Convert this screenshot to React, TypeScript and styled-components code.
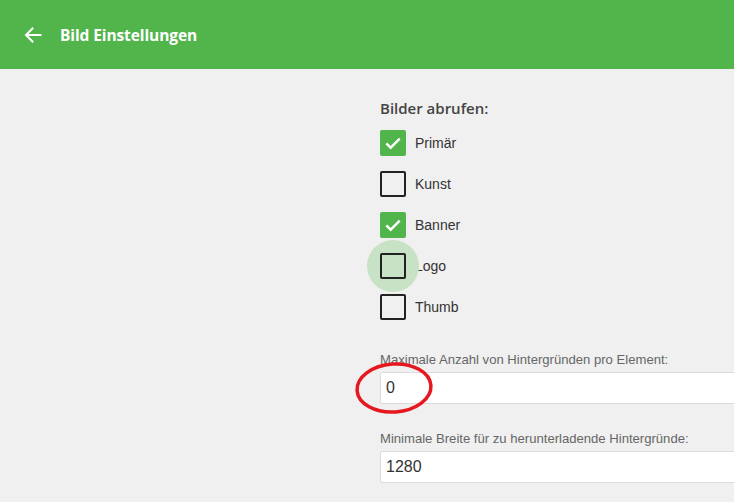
import styled, { createGlobalStyle } from 'styled-components';

const GlobalStyle = createGlobalStyle`
  html, body {
    margin: 0;
    padding: 0;
    overflow: hidden;
    background: #f0f0f0;
  }
  * {
    box-sizing: border-box;
  }
`;

const options = [
  { name: 'Primär', checked: true },
  { name: 'Kunst', checked: false },
  { name: 'Banner', checked: true },
  { name: 'Logo', checked: false, focused: true },
  { name: 'Thumb', checked: false },
];

const App = () => {
  return (
    <Page>
      <GlobalStyle />
      <Header>
        <BackButton aria-label="Zurück">
          <svg width="18" height="18" viewBox="0 0 18 18" fill="none">
            <path
              d="M16.5 9H2.5M8.5 2.5L2 9l6.5 6.5"
              stroke="#fff"
              strokeWidth="2"
              strokeLinecap="square"
            />
          </svg>
        </BackButton>
        <Title>Bild Einstellungen</Title>
      </Header>
      <Main>
        <Form>
          <SectionTitle>Bilder abrufen:</SectionTitle>
          <CheckList>
            {options.map(option => (
              <CheckRow key={option.name}>
                <BoxWrap>
                  {option.focused ? <Ripple /> : null}
                  <Box $checked={option.checked}>
                    {option.checked ? (
                      <svg width="18" height="18" viewBox="0 0 18 18" fill="none">
                        <path
                          d="M2.3 9.3l4.4 4.4L15.7 4.6"
                          stroke="#fff"
                          strokeWidth="2.4"
                        />
                      </svg>
                    ) : null}
                  </Box>
                </BoxWrap>
                <CheckLabel>{option.name}</CheckLabel>
              </CheckRow>
            ))}
          </CheckList>
          <Field>
            <FieldLabel>Maximale Anzahl von Hintergründen pro Element:</FieldLabel>
            <InputWrap>
              <TextInput defaultValue="0" />
              <Marker width="82" height="56" viewBox="0 0 82 56">
                <ellipse
                  cx="41"
                  cy="28"
                  rx="37"
                  ry="24"
                  transform="rotate(-4 41 28)"
                  fill="none"
                  stroke="#e5171f"
                  strokeWidth="3.5"
                />
              </Marker>
            </InputWrap>
          </Field>
          <Field>
            <FieldLabel>Minimale Breite für zu herunterladende Hintergründe:</FieldLabel>
            <InputWrap>
              <TextInput defaultValue="1280" />
            </InputWrap>
          </Field>
        </Form>
      </Main>
    </Page>
  );
};

export default App;

const Page = styled.div`
  width: 734px;
  height: 502px;
  overflow: hidden;
  background: #f0f0f0;
`;

const Header = styled.header`
  display: flex;
  align-items: center;
  height: 69px;
  padding: 0 0 0 22px;
  background: #52b54b;
  color: #fff;
`;

const BackButton = styled.button`
  display: flex;
  align-items: center;
  justify-content: center;
  width: 22px;
  height: 22px;
  padding: 0;
  border: none;
  background: none;
  cursor: pointer;
`;

const Title = styled.h1`
  margin: 0 0 0 16px;
  font-family: 'Open Sans', 'Noto Sans', sans-serif;
  font-size: 15.5px;
  font-weight: 700;
  letter-spacing: -0.1px;
`;

const Main = styled.main`
  display: flex;
  padding: 28px 0 0 380px;
`;

const Form = styled.div`
  display: flex;
  flex-direction: column;
  width: 440px;
  flex-shrink: 0;
`;

const SectionTitle = styled.h2`
  margin: 0;
  font-family: 'Open Sans', 'Noto Sans', sans-serif;
  font-size: 15px;
  font-weight: 600;
  line-height: 22px;
  color: #444;
`;

const CheckList = styled.div`
  display: flex;
  flex-direction: column;
  gap: 15px;
  margin-top: 11px;
`;

const CheckRow = styled.label`
  display: flex;
  align-items: center;
  height: 26px;
  cursor: pointer;
`;

const BoxWrap = styled.div`
  position: relative;
  width: 26px;
  height: 26px;
`;

const Ripple = styled.span`
  position: absolute;
  left: -13px;
  top: -13px;
  width: 52px;
  height: 52px;
  border-radius: 50%;
  background: #c7e2c4;
`;

const Box = styled.span<{ $checked: boolean }>`
  position: relative;
  display: flex;
  align-items: center;
  justify-content: center;
  width: 26px;
  height: 26px;
  border-radius: 2px;
  border: ${p => (p.$checked ? 'none' : '2px solid #222')};
  background: ${p => (p.$checked ? '#52b54b' : 'transparent')};
`;

const CheckLabel = styled.span`
  margin-left: 9px;
  font-family: 'Liberation Sans', Arial, sans-serif;
  font-size: 14px;
  color: #333;
`;

const Field = styled.div`
  display: flex;
  flex-direction: column;
  margin-top: 32px;
  & + & {
    margin-top: 27px;
  }
`;

const FieldLabel = styled.div`
  font-family: 'Liberation Sans', Arial, sans-serif;
  font-size: 13.1px;
  line-height: 16px;
  color: #666;
`;

const InputWrap = styled.div`
  position: relative;
  margin-top: 4px;
`;

const TextInput = styled.input`
  display: block;
  width: 100%;
  height: 32px;
  padding: 0 5px;
  border: 1px solid #dcdcdc;
  border-radius: 2px;
  background: #fff;
  font-family: 'Liberation Sans', Arial, sans-serif;
  font-size: 16px;
  color: #333;
  outline: none;
`;

const Marker = styled.svg`
  position: absolute;
  left: -27px;
  top: -12px;
  pointer-events: none;
`;
